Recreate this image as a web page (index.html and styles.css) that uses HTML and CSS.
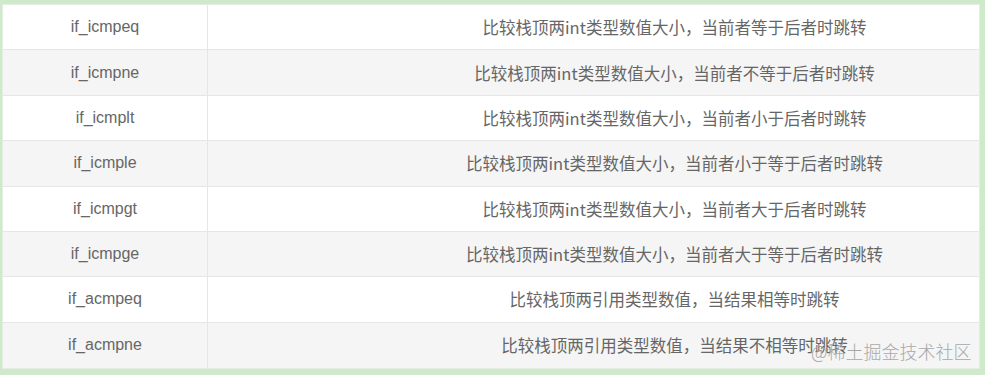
FILE: index.html
```html
<!DOCTYPE html>
<html lang="zh-CN">
<head>
<meta charset="utf-8">
<title>比较跳转指令</title>
<link rel="stylesheet" href="styles.css">
</head>
<body>
<div class="frame">
  <div class="table">
    <div class="row">
      <div class="cell op">if_icmpeq</div>
      <div class="cell desc">比较栈顶两int类型数值大小，当前者等于后者时跳转</div>
    </div>
    <div class="row alt">
      <div class="cell op">if_icmpne</div>
      <div class="cell desc">比较栈顶两int类型数值大小，当前者不等于后者时跳转</div>
    </div>
    <div class="row">
      <div class="cell op">if_icmplt</div>
      <div class="cell desc">比较栈顶两int类型数值大小，当前者小于后者时跳转</div>
    </div>
    <div class="row alt">
      <div class="cell op">if_icmple</div>
      <div class="cell desc">比较栈顶两int类型数值大小，当前者小于等于后者时跳转</div>
    </div>
    <div class="row">
      <div class="cell op">if_icmpgt</div>
      <div class="cell desc">比较栈顶两int类型数值大小，当前者大于后者时跳转</div>
    </div>
    <div class="row alt">
      <div class="cell op">if_icmpge</div>
      <div class="cell desc">比较栈顶两int类型数值大小，当前者大于等于后者时跳转</div>
    </div>
    <div class="row">
      <div class="cell op">if_acmpeq</div>
      <div class="cell desc">比较栈顶两引用类型数值，当结果相等时跳转</div>
    </div>
    <div class="row alt last">
      <div class="cell op">if_acmpne</div>
      <div class="cell desc">比较栈顶两引用类型数值，当结果不相等时跳转</div>
    </div>
  </div>
  <div class="watermark">@稀土掘金技术社区</div>
</div>
</body>
</html>
```
FILE: styles.css
```css
html, body {
  margin: 0;
  padding: 0;
  background: #cfe9cb;
}
body {
  width: 985px;
  height: 375px;
  overflow: hidden;
}
.frame {
  position: relative;
  padding: 5px 6px 7px 3px;
  height: 363px;
}
.table {
  height: 363px;
  background: #ffffff;
  display: grid;
  grid-template-rows: repeat(8, 1fr);
  box-shadow: 0 0 0 1px #e4eee2;
}
.row {
  display: grid;
  grid-template-columns: 205px 1fr;
  background: #ffffff;
  border-bottom: 1px solid #e6e6e6;
}
.row.alt {
  background: #f5f5f5;
}
.row.last {
  border-bottom: none;
}
.cell {
  display: flex;
  align-items: center;
  justify-content: center;
  color: #666666;
}
.op {
  font-family: "Liberation Sans", Arial, sans-serif;
  font-size: 16px;
  border-right: 1px solid #e6e6e6;
}
.desc {
  font-family: "Noto Sans CJK SC", "Liberation Sans", sans-serif;
  font-size: 16.5px;
  padding-left: 162px;
  letter-spacing: 0;
}
.watermark {
  position: absolute;
  left: 811px;
  top: 338px;
  font-family: "Noto Sans CJK SC", sans-serif;
  font-size: 18px;
  font-weight: 300;
  color: #a8a8a8;
  white-space: nowrap;
}
```
